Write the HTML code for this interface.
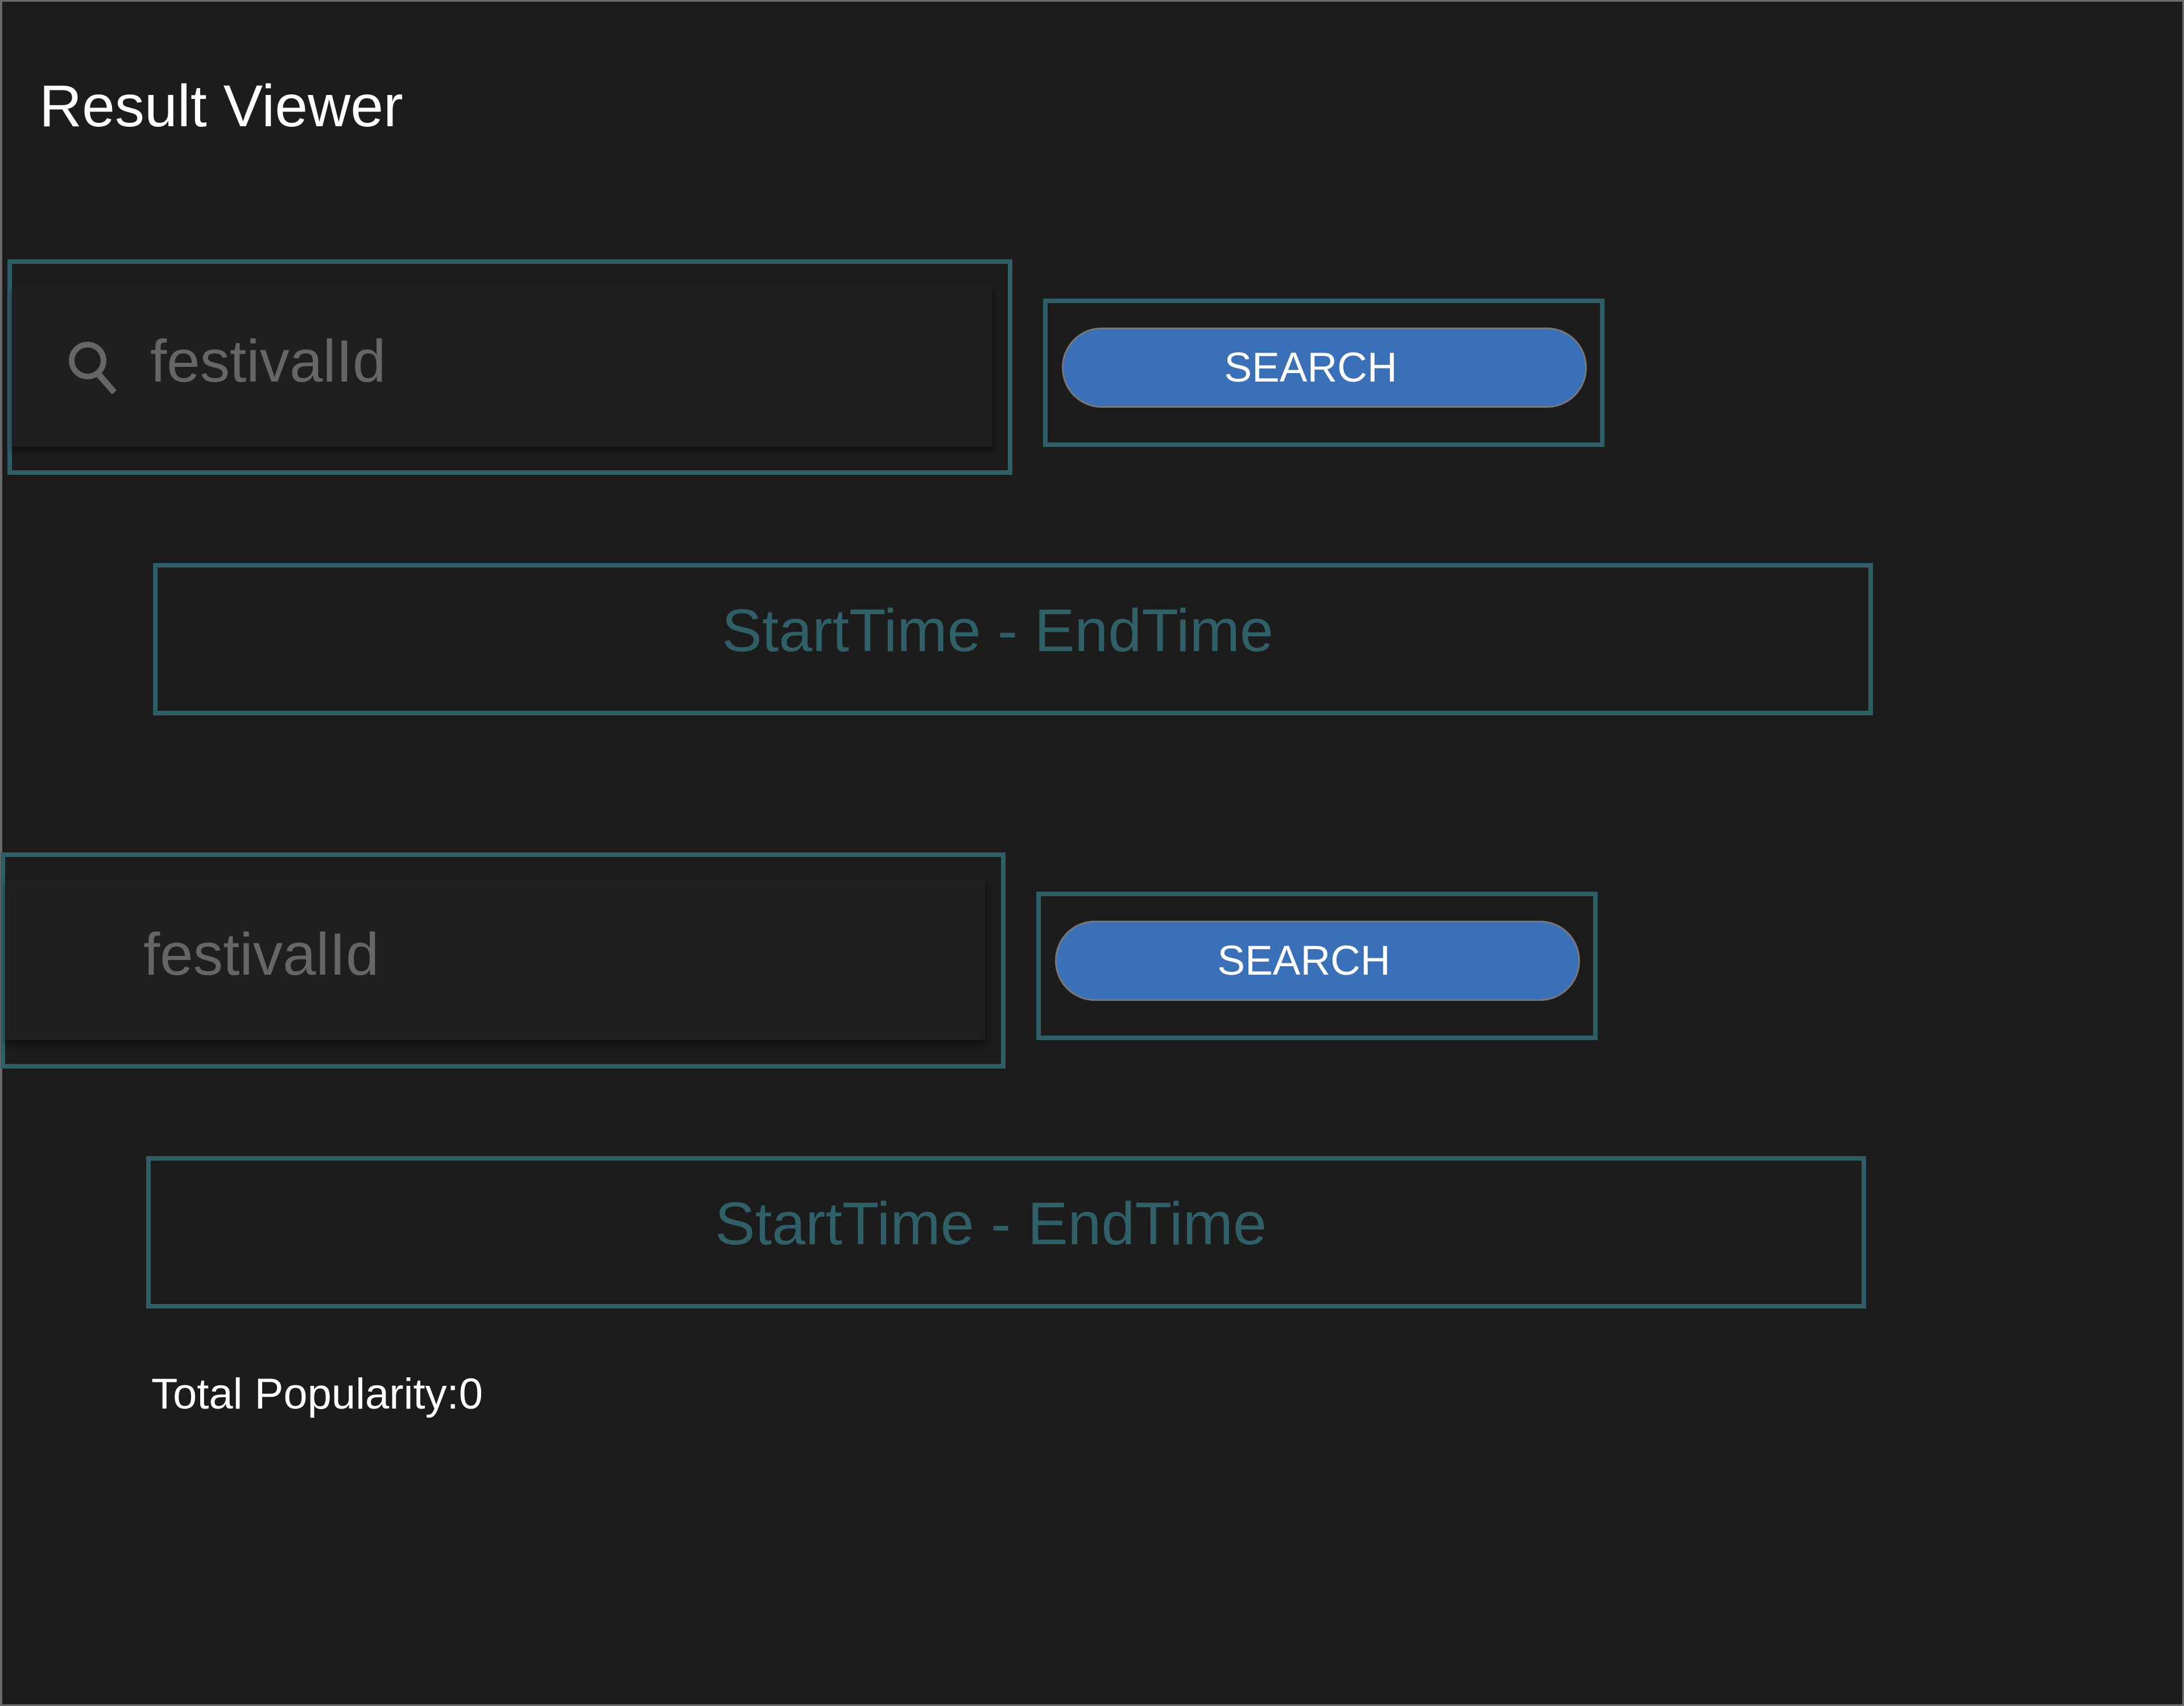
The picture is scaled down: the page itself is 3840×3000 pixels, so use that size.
<!DOCTYPE html>
<html><head><meta charset="utf-8"><style>
html,body{margin:0;padding:0}
body{width:3840px;height:3000px;background:#1c1c1c;position:relative;overflow:hidden;font-family:"Liberation Sans",Arial,sans-serif}
.a{position:absolute;box-sizing:border-box}
.frame{left:0;top:0;width:3840px;height:3000px;border:3px solid #6a6a6a;border-left-width:4px}
.box{border:8px solid #2f5f66}
.inp{background:#1f1f1f;box-shadow:0 8px 10px rgba(0,0,0,.45)}
.ph{position:absolute;color:#666;font-size:105px;line-height:1;white-space:nowrap}
.btn{background:#3a70b8;border:3px solid #777;border-radius:70px;color:#fff;font-size:73px;display:flex;align-items:center;justify-content:center;padding-right:48px}
.time{color:#2f6068;font-size:106px;display:flex;align-items:center;justify-content:center;padding-bottom:30px;padding-right:54px}
</style></head><body>
<div class="a frame"></div>
<div class="a" style="left:69px;top:135px;color:#fff;font-size:104px;line-height:1;white-space:nowrap">Result Viewer</div>

<div class="a box" style="left:13px;top:456px;width:1767px;height:379px"></div>
<div class="a inp" style="left:21px;top:503px;width:1723px;height:283px"></div>
<svg class="a" style="left:110px;top:590px" width="110" height="110" viewBox="110 590 110 110"><circle cx="154" cy="634" r="28" fill="none" stroke="#666" stroke-width="10"/><line x1="174" y1="659" x2="201" y2="690" stroke="#666" stroke-width="11"/></svg>
<div class="a ph" style="left:264px;top:583px">festivalId</div>
<div class="a box" style="left:1834px;top:525px;width:987px;height:261px"></div>
<div class="a btn" style="left:1867px;top:576px;width:923px;height:141px">SEARCH</div>
<div class="a box time" style="left:269px;top:990px;width:3024px;height:268px">StartTime - EndTime</div>

<div class="a box" style="left:1px;top:1499px;width:1767px;height:380px"></div>
<div class="a inp" style="left:9px;top:1546px;width:1723px;height:283px"></div>
<div class="a ph" style="left:252px;top:1626px">festivalId</div>
<div class="a box" style="left:1822px;top:1568px;width:987px;height:261px"></div>
<div class="a btn" style="left:1855px;top:1619px;width:923px;height:141px">SEARCH</div>
<div class="a box time" style="left:257px;top:2033px;width:3024px;height:268px">StartTime - EndTime</div>

<div class="a" style="left:266px;top:2414px;color:#fff;font-size:76px;line-height:1;white-space:nowrap">Total Popularity:0</div>
</body></html>
